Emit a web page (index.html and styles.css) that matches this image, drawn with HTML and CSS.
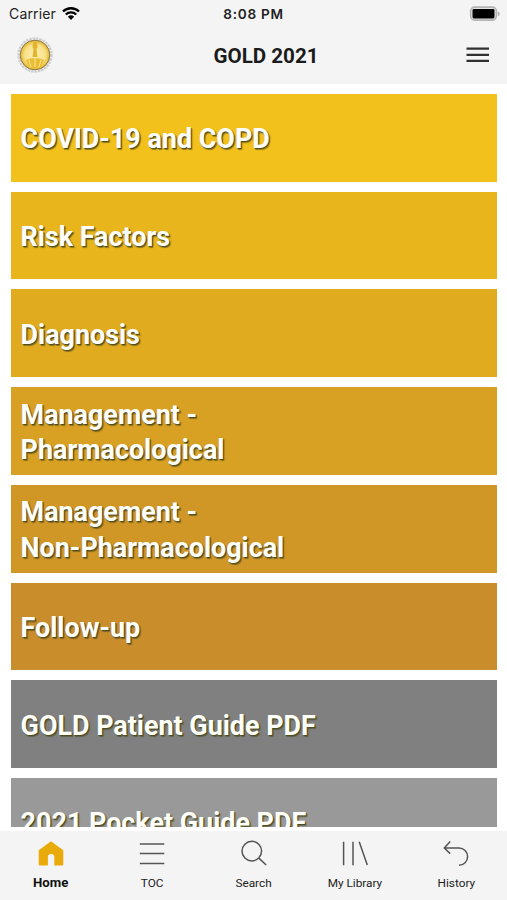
FILE: index.html
```
<!DOCTYPE html>
<html lang="en">
<head>
  <meta charset="UTF-8">
  <meta name="viewport" content="width=device-width, initial-scale=1.0">
  <title>GOLD 2021</title>
  <link rel="stylesheet" href="styles.css">
</head>
<body>
  <div class="app">
    <header class="header">
      <div class="status-bar">
        <div class="carrier">
          <span class="carrier-name">Carrier</span>
          <svg class="wifi" width="18" height="14" viewBox="0 0 18 14">
            <path d="M1 4.500a11.500 11.500 0 0 1 16 0" fill="none" stroke="#000" stroke-width="2.4"/>
            <path d="M3.800 7.500a7.500 7.500 0 0 1 10.400 0" fill="none" stroke="#000" stroke-width="2.3"/>
            <path d="M5.900 9.700a4.500 4.500 0 0 1 6.200 0L9 12.900z"/>
          </svg>
        </div>
        <div class="clock">8:08 PM</div>
        <svg class="battery" width="32" height="16" viewBox="0 0 32 16">
          <rect x="1.600" y="1.100" width="25.800" height="13" rx="4" fill="#e4e4e4" stroke="#b4b4b4" stroke-width="1.600"/>
          <rect x="3.500" y="3" width="22" height="9.400" rx="1.400"/>
          <path d="M28.800 5.300q2 1 2 2.500t-2 2.500z" fill="#b4b4b4"/>
        </svg>
      </div>
      <div class="nav-bar">
        <svg class="logo" width="38" height="38" viewBox="0 0 38 38">
          <defs>
            <radialGradient id="coin">
              <stop offset="0" stop-color="#fbeeb4"/>
              <stop offset="0.7" stop-color="#f8e189"/>
              <stop offset="1" stop-color="#e5b42c"/>
            </radialGradient>
          </defs>
          <circle cx="19" cy="19" r="16.500" fill="none" stroke="#cfcfd1" stroke-width="2.400" stroke-dasharray="2.600 0.800"/>
          <circle cx="19" cy="19" r="14.800" fill="url(#coin)" stroke="#8a7641" stroke-width="1"/>
          <path d="M17 6h4l.5 5-1 2 1 8h-5l1-8-1-2z" fill="#e3b42e"/>
          <path d="M10 24q9-4 18 0l-3 7q-6 3-12 0z" fill="#ebbd33"/>
          <path d="M13 24l2 7M19 22v9M25 24l-2 7" fill="none" stroke="#f9e59a" stroke-width="1"/>
        </svg>
        <h1 class="title">GOLD 2021</h1>
        <svg class="menu" width="24" height="18" viewBox="0 0 24 18">
          <path d="M.5 2.600h22.500M.5 8.800h22.500M.5 14.900h22.500" stroke="#303030" stroke-width="2.300"/>
        </svg>
      </div>
    </header>

    <main class="list">
      <a class="tile covid"><span>COVID-19 and COPD</span></a>
      <a class="tile risk"><span>Risk Factors</span></a>
      <a class="tile diagnosis"><span>Diagnosis</span></a>
      <a class="tile pharma"><span>Management -<br>Pharmacological</span></a>
      <a class="tile non-pharma"><span>Management -<br>Non-Pharmacological</span></a>
      <a class="tile follow-up"><span>Follow-up</span></a>
      <a class="tile patient-guide"><span>GOLD Patient Guide PDF</span></a>
      <a class="tile pocket-guide"><span>2021 Pocket Guide PDF</span></a>
    </main>

    <nav class="tabs">
      <a class="tab active">
        <svg width="28" height="28" viewBox="0 0 28 28">
          <path d="M14 2.300 26.300 11.200V25.500q0 1-1 1H17.300V18q0-3-3.200-3t-3.200 3v8.500H2.700q-1 0-1-1V11.200z" fill="#e9ab0b"/>
        </svg>
        <span>Home</span>
      </a>
      <a class="tab">
        <svg width="28" height="28" viewBox="0 0 28 28">
          <path d="M1.800 5h24.500M1.800 14.600h24.500M1.800 24.400h24.500"/>
        </svg>
        <span>TOC</span>
      </a>
      <a class="tab">
        <svg width="28" height="28" viewBox="0 0 28 28">
          <circle cx="11.800" cy="12.100" r="9.800"/>
          <path d="M18.800 19.100 26.200 26"/>
        </svg>
        <span>Search</span>
      </a>
      <a class="tab">
        <svg width="28" height="28" viewBox="0 0 28 28">
          <path d="M2.600 2.800v23.400M12 2.800v23.400M18.200 2.800 26.300 26"/>
        </svg>
        <span>My Library</span>
      </a>
      <a class="tab">
        <svg width="28" height="28" viewBox="0 0 28 28">
          <path d="M8.200 2.600 2.300 9l5.900 5.600M2.600 9H17a8.600 8.600 0 0 1 0 17.200"/>
        </svg>
        <span>History</span>
      </a>
    </nav>
  </div>
</body>
</html>
```
FILE: styles.css
```
* {
    box-sizing: border-box;
}
body {
    margin: 0;
    background: #fff;
    font-family: Roboto, "Liberation Sans", sans-serif;
}
.app {
    display: flex;
    flex-direction: column;
    height: 100vh;
    overflow: hidden;
}
.header {
    flex: none;
    height: 84px;
    background: #f4f4f4;
}
.status-bar {
    display: grid;
    grid-template-columns: 1fr auto 1fr;
    align-items: center;
    height: 27px;
    padding: 0 6px 0 9px;
    font-family: Inter, "Liberation Sans", sans-serif;
    font-size: 13.5px;
    color: #222;
}
.carrier {
    display: flex;
    align-items: center;
    gap: 6px;
}
.carrier-name {
    font-size: 14px;
    letter-spacing: 0.15px;
}
.clock {
    margin-left: -3px;
    font-size: 13.6px;
    font-weight: 600;
    letter-spacing: 0.7px;
}
.battery {
    justify-self: end;
}
.nav-bar {
    display: grid;
    grid-template-columns: 1fr auto 1fr;
    align-items: center;
    height: 57px;
    padding: 0 17px 2px 16px;
}
.title {
    margin: 0;
    padding: 2px 0 0 26px;
    font-size: 20.6px;
    font-weight: 700;
    color: #1b1b1b;
}
.menu {
    justify-self: end;
}
.list {
    flex: 1;
    min-height: 0;
    display: flex;
    flex-direction: column;
    gap: 10px;
    padding: 9.8px 10px 0 11px;
    overflow: hidden;
}
.tile {
    flex: none;
    display: flex;
    align-items: center;
    height: 87.75px;
    padding: 4.6px 9.6px 0;
    font-size: 26.9px;
    font-weight: 700;
    line-height: 35.5px;
    color: #fffffa;
    text-shadow: 1px 1px 1px #4a4a20, 1.5px 1.5px 1px rgba(70, 70, 30, 0.5);
}
.covid { background: #f3c11b; }
.risk { background: #e8b51c; }
.diagnosis { background: #e0ab1f; }
.pharma { background: #d8a123; }
.non-pharma { background: #d09727; }
.follow-up { background: #c98d2c; }
.patient-guide { background: #808080; }
.pocket-guide { background: #999; }
.tabs {
    flex: none;
    display: flex;
    height: 73px;
    border-top: 4px solid #fff;
    background: #f4f4f4;
}
.tab {
    flex: 1;
    display: flex;
    flex-direction: column;
    align-items: center;
    gap: 8px;
    padding-top: 8px;
    font-size: 11.8px;
    font-weight: 400;
    line-height: 16px;
    color: #222;
}
.tab svg {
    fill: none;
    stroke: #555;
    stroke-width: 1.5;
}
.tab.active {
    font-size: 13.2px;
    font-weight: 700;
    line-height: 15px;
    color: #111;
}
.tab.active svg {
    stroke: none;
}
```
